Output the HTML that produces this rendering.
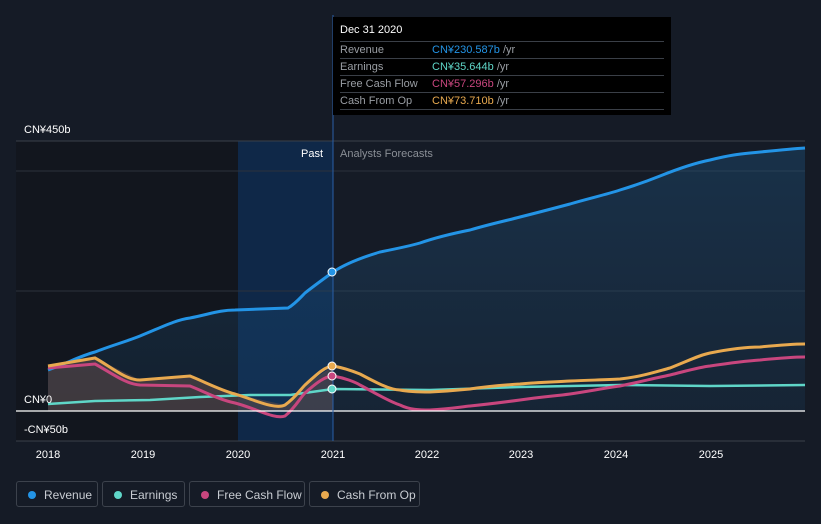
<!DOCTYPE html>
<html><head><meta charset="utf-8"><style>
body{margin:0;background:#151b26;width:821px;height:524px;overflow:hidden;font-family:"Liberation Sans","Noto Sans CJK SC",sans-serif}
svg{position:absolute;left:0;top:0}
.tt{position:absolute;left:333px;top:17px;width:338px;height:98px;background:#000;color:#fff;font-size:11px}
.row{position:absolute;left:7px;width:324px;height:16px;border-top:1px solid #3a3f47;line-height:16px;color:#9a9ea4}
.row span{position:absolute;left:92px}
.lg{position:absolute;top:481px;height:26px;border:1px solid #3c424c;border-radius:3px;color:#c8ccd2;font-size:12px;line-height:26px;box-sizing:border-box}
.lg i{position:absolute;left:11px;top:9px;width:8px;height:8px;border-radius:50%}
.lg b{font-weight:normal;position:absolute;left:27px}
</style></head><body>
<svg width="821" height="524">
<defs>
<linearGradient id="rg" x1="0" y1="0" x2="0" y2="1"><stop offset="0" stop-color="#1f5a8a" stop-opacity=".35"/><stop offset="1" stop-color="#1f5a8a" stop-opacity=".15"/></linearGradient>
</defs>
<rect x="16" y="141" width="222" height="300" fill="#12161e"/>
<rect x="238" y="141" width="95" height="300" fill="#0f2848"/>
<line x1="16" y1="141" x2="805" y2="141" stroke="#3a404a"/>
<line x1="16" y1="171" x2="805" y2="171" stroke="#2c323c"/>
<line x1="16" y1="291" x2="805" y2="291" stroke="#2c323c"/>
<line x1="16" y1="441" x2="805" y2="441" stroke="#3a404a"/>
<path d="M48,370 C70,362 80,356 95,352 C110,346 125,342 140,336 C160,328 175,320 190,318 C210,314 220,310 235,310 L288,308 C295,304 300,298 305,293 C315,285 325,278 333,272 C345,264 360,258 380,252 C400,248 410,246 420,243 C440,236 460,232 470,230 C490,224 505,221 520,217 C540,212 555,208 570,204 C590,198 605,195 620,190 C640,184 650,180 660,176 C680,168 695,163 710,160 C730,155 740,154 750,153 C770,151 790,149 805,148 L805,411 L48,411 Z" fill="url(#rg)"/>
<path d="M48,366 L95,358 L140,380 L190,376 L235,394 L285,405 L305,385 L333,366 L333,411 L48,411Z" fill="#5a4a4a" opacity=".6"/>
<path d="M48,370 C70,362 80,356 95,352 C110,346 125,342 140,336 C160,328 175,320 190,318 C210,314 220,310 235,310 L288,308 C295,304 300,298 305,293 C315,285 325,278 333,272 C345,264 360,258 380,252 C400,248 410,246 420,243 C440,236 460,232 470,230 C490,224 505,221 520,217 C540,212 555,208 570,204 C590,198 605,195 620,190 C640,184 650,180 660,176 C680,168 695,163 710,160 C730,155 740,154 750,153 C770,151 790,149 805,148" fill="none" stroke="#2394e6" stroke-width="3"/>
<polyline points="48,404 95,401 150,400 200,397 250,395 290,395 333,389 430,390 520,387 620,385 710,386 805,385" fill="none" stroke="#5fd6c8" stroke-width="2.5" stroke-linejoin="round"/>
<path d="M48,368 L95,364 C110,372 125,384 140,385 L190,386 C205,392 220,400 235,403 C255,408 275,420 285,416 C295,408 300,398 305,393 C315,384 325,376 333,376 C345,378 355,382 360,385 C375,393 390,402 400,405 C410,410 420,410 430,410 C450,409 460,407 470,406 C490,404 505,402 520,400 C540,397 555,396 570,394 C590,391 605,388 620,386 C640,382 655,378 670,375 C690,370 700,367 710,366 C730,363 745,361 760,360 C780,358 795,357 805,357" fill="none" stroke="#c8467e" stroke-width="3"/>
<path d="M48,366 L95,358 C110,366 125,380 140,380 L190,376 C205,382 220,390 235,394 C255,400 275,410 285,405 C295,398 300,390 305,385 C315,376 325,366 333,366 C345,368 355,372 360,374 C375,382 390,390 400,390 C410,392 420,392 430,392 C450,391 460,390 470,389 C490,386 505,385 520,384 C540,382 555,382 570,381 C590,380 605,380 620,379 C640,377 655,372 670,368 C690,360 700,355 710,353 C730,349 745,347 760,347 C780,345 795,344 805,344" fill="none" stroke="#e8a94f" stroke-width="3"/>
<line x1="16" y1="411" x2="805" y2="411" stroke="#fff" stroke-width="1.2"/>
<line x1="333" y1="15" x2="333" y2="441" stroke="#2a5fa8" stroke-width="1"/>
<circle cx="332" cy="272" r="4" fill="#2394e6" stroke="#fff"/>
<circle cx="332" cy="366" r="4" fill="#e8a94f" stroke="#fff"/>
<circle cx="332" cy="376" r="4" fill="#c8467e" stroke="#fff"/>
<circle cx="332" cy="389" r="4" fill="#5fd6c8" stroke="#fff"/>
<g font-size="11" fill="#fff" font-family="Liberation Sans,Noto Sans CJK SC,sans-serif">
<text x="24" y="133">CN¥450b</text>
<text x="24" y="403">CN¥0</text>
<text x="24" y="433">-CN¥50b</text>
<text x="323" y="157" text-anchor="end">Past</text>
<text x="340" y="157" fill="#8a8f96">Analysts Forecasts</text>
<g text-anchor="middle"><text x="48" y="458">2018</text><text x="143" y="458">2019</text><text x="238" y="458">2020</text><text x="333" y="458">2021</text><text x="427" y="458">2022</text><text x="521" y="458">2023</text><text x="616" y="458">2024</text><text x="711" y="458">2025</text></g>
</g>
</svg>
<div class="tt">
<div style="position:absolute;left:7px;top:7px;font-weight:normal">Dec 31 2020</div>
<div class="row" style="top:24px">Revenue<span style="color:#2394e6">CN¥230.587b <em style="font-style:normal;color:#9a9ea4">/yr</em></span></div>
<div class="row" style="top:41px">Earnings<span style="color:#5fd6c8">CN¥35.644b <em style="font-style:normal;color:#9a9ea4">/yr</em></span></div>
<div class="row" style="top:58px">Free Cash Flow<span style="color:#c8467e">CN¥57.296b <em style="font-style:normal;color:#9a9ea4">/yr</em></span></div>
<div class="row" style="top:75px">Cash From Op<span style="color:#e8a94f">CN¥73.710b <em style="font-style:normal;color:#9a9ea4">/yr</em></span></div>
<div class="row" style="top:92px;height:0"></div>
</div>
<div class="lg" style="left:16px;width:82px"><i style="background:#2394e6"></i><b>Revenue</b></div>
<div class="lg" style="left:102px;width:83px"><i style="background:#5fd6c8"></i><b>Earnings</b></div>
<div class="lg" style="left:189px;width:116px"><i style="background:#c8467e"></i><b>Free Cash Flow</b></div>
<div class="lg" style="left:309px;width:111px"><i style="background:#e8a94f"></i><b>Cash From Op</b></div>
</body></html>
